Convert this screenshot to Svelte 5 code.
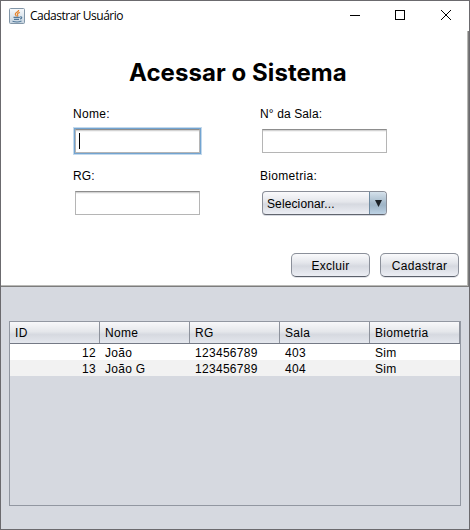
<script>
  const columns = ['ID', 'Nome', 'RG', 'Sala', 'Biometria'];
  const rows = [
    ['12', 'João', '123456789', '403', 'Sim'],
    ['13', 'João G', '123456789', '404', 'Sim']
  ];
</script>

<div class="window">
  <header>
    <svg class="java" width="16" height="16" viewBox="0 0 16 16">
      <defs>
        <linearGradient id="tile" x1="0" y1="0" x2="0" y2="1">
          <stop offset="0" stop-color="#f7fafc" />
          <stop offset="1" stop-color="#c5d3df" />
        </linearGradient>
      </defs>
      <rect x=".5" y=".5" width="15" height="15" rx="1" fill="url(#tile)" stroke="#8296a8" />
      <path d="M9.7 2C9.8 4 6 4.5 6.3 6.2C6.4 7 7.3 7.5 7.5 8.3M10.8 4.4C8.5 5.2 8 6 8.7 7C9 7.5 8.8 8 8.3 8.5" fill="none" stroke="#e5842d" stroke-width="1.2" />
      <path d="M4.5 9.4H10.8M5 11.4H10M11.2 8.9C13.4 8.5 13.2 10.6 11 11M3.5 13.3C6 14 10.5 14 12.5 13.1" fill="none" stroke="#53799a" stroke-width="1.1" />
    </svg>
    <span class="caption">Cadastrar Usuário</span>
    <div class="controls">
      <svg width="10" height="10" viewBox="0 0 10 10"><path d="M0 5.5H10" /></svg>
      <svg width="10" height="10" viewBox="0 0 10 10"><rect x=".5" y=".5" width="9" height="9" /></svg>
      <svg width="10" height="10" viewBox="0 0 10 10"><path d="M0 0L10 10M10 0L0 10" /></svg>
    </div>
  </header>

  <main>
    <h1>Acessar o Sistema</h1>
    <form>
      <div class="field"><span class="label">Nome:</span><div class="input focus"><i></i></div></div>
      <div class="field"><span class="label tight">N° da Sala:</span><div class="input"></div></div>
      <div class="field"><span class="label tight">RG:</span><div class="input"></div></div>
      <div class="field">
        <span class="label">Biometria:</span>
        <div class="select">
          <span class="tight">Selecionar...</span>
          <div class="arrow"><svg width="7" height="7" viewBox="0 0 7 7"><path d="M0 0H7L3.5 7Z" fill="#1c2227" /></svg></div>
        </div>
      </div>
    </form>
    <div class="actions">
      <button type="button">Excluir</button>
      <button type="button">Cadastrar</button>
    </div>
  </main>

  <section>
    <div class="table">
      <div class="row head">
        {#each columns as name}<div class="cell">{name}</div>{/each}
      </div>
      {#each rows as row}
        <div class="row">
          {#each row as value}<div class="cell">{value}</div>{/each}
        </div>
      {/each}
    </div>
  </section>
</div>

<style>
  :global(body) { margin: 0; }
  .window {
    box-sizing: border-box;
    width: 470px;
    height: 530px;
    border: 1px solid #6b6a6e;
    background: #d6d9e0;
    display: flex;
    flex-direction: column;
    font: 12px/16px "Liberation Sans", Arial, sans-serif;
    letter-spacing: .3px;
    color: #000;
    overflow: hidden;
  }
  header {
    height: 30px;
    flex: none;
    display: flex;
    align-items: center;
    background: #fff;
    padding-left: 8px;
  }
  .java { flex: none; margin-bottom: 1px; }
  .caption {
    margin-left: 5px;
    font: 12px/16px "Open Sans", "Noto Sans", sans-serif;
    letter-spacing: -.5px;
    white-space: nowrap;
  }
  .controls { margin-left: auto; display: flex; gap: 36px; padding: 0 18px 2px 0; }
  .controls svg { fill: none; stroke: #000; stroke-width: 1; }
  .controls svg:first-child { margin-right: -1px; }
  main {
    box-sizing: border-box;
    width: 468px;
    height: 256px;
    flex: none;
    background: #fff;
    border: solid #7c7c7c;
    border-width: 0 1px 1px 0;
    box-shadow: inset -1px -1px #b9b9b6;
    padding-top: 26px;
  }
  h1 {
    margin: 0 0 0 128px;
    font: 700 24px/32px Inter, sans-serif;
    letter-spacing: .06px;
    white-space: nowrap;
  }
  form {
    display: grid;
    grid-template-columns: 187px 187px;
    grid-auto-rows: 62px;
    padding: 17px 0 0 72px;
  }
  .field { display: flex; flex-direction: column; }
  .label { height: 16px; }
  .tight { letter-spacing: .12px; }
  .input {
    box-sizing: border-box;
    width: 125px;
    height: 24px;
    margin: 7px 0 0 2px;
    border: 1px solid #b5b5b5;
    border-top-color: #8d8d8d;
    box-shadow: inset 0 1px #d3d3d3, inset 0 2px #f3f3f3;
    background: #fff;
  }
  .focus { outline: 1px solid #73a4d1; box-shadow: inset 0 1px #d3d3d3, inset 0 2px #f3f3f3, 0 0 0 2px #c3d9ec; }
  .focus i { display: block; width: 1px; height: 16px; margin: 3px 0 0 3px; background: #000; }
  .select {
    box-sizing: border-box;
    width: 125px;
    height: 24px;
    margin: 7px 0 0 2px;
    display: flex;
    align-items: center;
    border: 1px solid #8a8e98;
    border-bottom-color: #61656e;
    border-radius: 4px;
    background: linear-gradient(#fafafc, #e4e6eb 45%, #d6d9e0 55%, #eceef4);
    box-shadow: 0 1px #d6d9e0;
    overflow: hidden;
  }
  .select span { padding: 1px 0 0 4px; }
  .arrow {
    width: 16px;
    height: 22px;
    margin-left: auto;
    display: flex;
    align-items: center;
    justify-content: center;
    border-left: 1px solid #708ba1;
    background: linear-gradient(#d5e1eb, #a4b9ca 50%, #9fb5c7 60%, #bdd2e4);
  }
  .actions { display: flex; gap: 10px; margin: 23px 0 0 290px; }
  button {
    box-sizing: border-box;
    width: 79px;
    height: 24px;
    padding: 2px 0 0;
    border: 1px solid #8b909a;
    border-bottom-color: #5b606a;
    border-radius: 5px;
    background: linear-gradient(#fafafc, #e4e6eb 40%, #d6d9e0 55%, #eceef4);
    box-shadow: 0 1px #e2e4e9;
    font: inherit;
    letter-spacing: inherit;
    color: #000;
  }
  section { padding: 34px 0 0 8px; }
  .table {
    box-sizing: border-box;
    width: 452px;
    height: 185px;
    border: 1px solid #9297a1;
  }
  .row { display: flex; height: 16px; background: #fff; }
  .row:nth-child(3) { background: #f2f2f2; }
  .cell { box-sizing: border-box; width: 90px; padding: 1px 5px 0; white-space: nowrap; }
  .row:not(.head) .cell:first-child { text-align: right; padding-right: 4px; }
  .head {
    box-sizing: border-box;
    height: 22px;
    border-bottom: 1px solid #747985;
    background: linear-gradient(#f8f8fa, #e5e7eb 45%, #d6d9e0 60%, #e4e7ed);
  }
  .head .cell { padding-top: 3px; border-right: 1px solid #8d929c; }
</style>
